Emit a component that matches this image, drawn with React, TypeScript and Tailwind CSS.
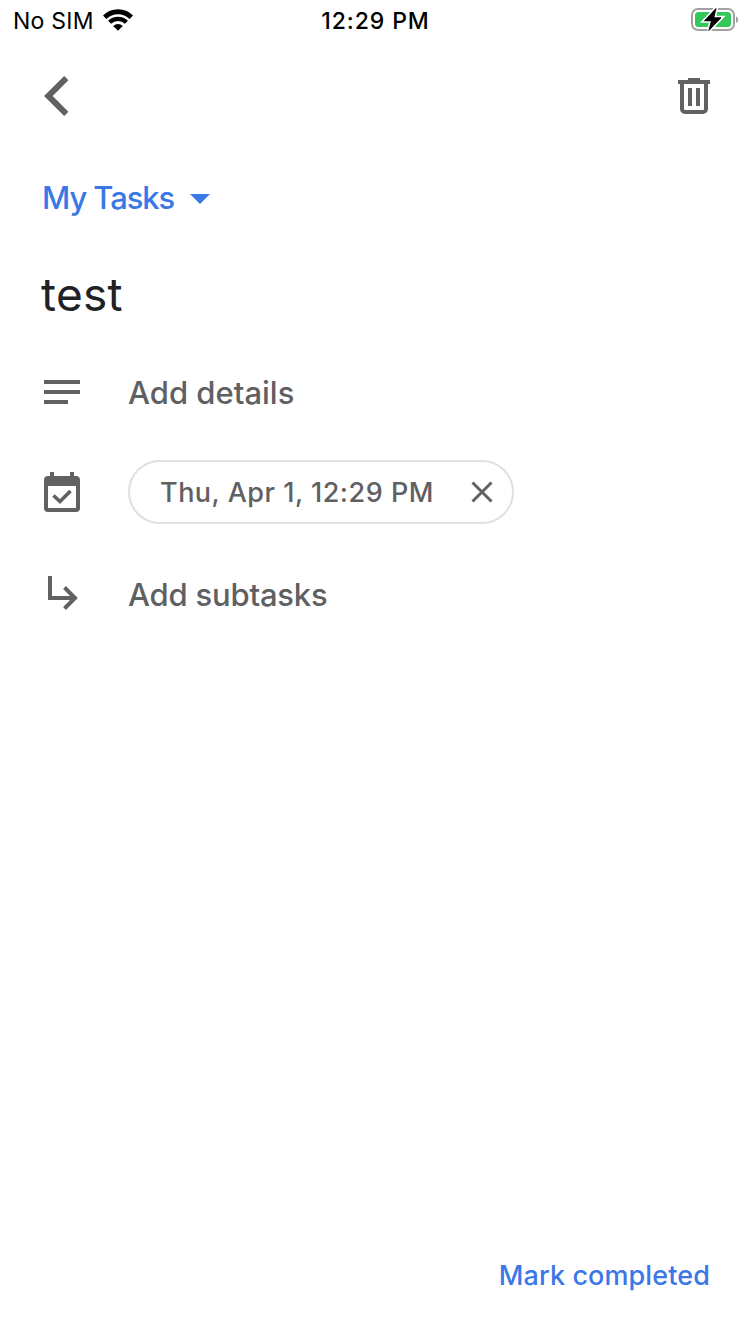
import type { ReactNode } from "react";

function StatusBar() {
  return (
    <div className="grid h-10 grid-cols-3 items-center pl-[13px] pr-[11px] text-black">
      <div className="flex items-center gap-[9px]">
        <span className="whitespace-nowrap pt-0.5 text-[23px] leading-[38px] tracking-[0.25px]">No SIM</span>
        <svg width="30" height="22" viewBox="0 0 30 22" fill="none" stroke="#000">
          <path d="M1.700 8.200a19 19 0 0 1 26.600 0" strokeWidth="4.800" />
          <path d="M6.600 13.300a12 12 0 0 1 16.800 0" strokeWidth="4.400" />
          <path d="M10.200 17a7 7 0 0 1 9.600 0L15 21.800z" fill="#000" stroke="none" />
        </svg>
      </div>
      <span className="whitespace-nowrap pt-0.5 pr-px text-center text-[23px] font-medium leading-[38px] tracking-[0.9px]">12:29 PM</span>
      <svg className="justify-self-end" width="48" height="24" viewBox="0 0 48 24">
        <rect x="1" y="1" width="42" height="21" rx="6" fill="#fff" stroke="#a2a2a4" strokeWidth="2" />
        <rect x="4" y="4" width="36" height="15" rx="3.5" fill="#34c759" />
        <path d="M45 8.200c3 1.500 3 5.200 0 6.800z" fill="#a2a2a4" />
        <path d="M25 .5 13.500 12.800h7L17.800 22.500 30 9.800h-7.200z" fill="#000" stroke="#fff" strokeWidth="4" paintOrder="stroke" />
        <path d="M25 .5 13.500 12.800h7L17.800 22.500 30 9.800h-7.200z" fill="#000" stroke="#000" strokeWidth=".8" />
      </svg>
    </div>
  );
}

function Row({ icon, children, className }: { icon: ReactNode; children: ReactNode; className: string }) {
  return (
    <div className={`flex items-center gap-12 pl-[44px] ${className}`}>
      <div className="flex w-9 shrink-0 justify-center">{icon}</div>
      {children}
    </div>
  );
}

export default function App() {
  return (
    <main className="flex h-[1334px] w-[750px] flex-col bg-white font-['Inter',sans-serif] text-[#5f6062]">
      <StatusBar />

      <header className="flex h-28 items-center justify-between pl-[44px] pr-10">
        <button aria-label="Back">
          <svg width="25" height="40" viewBox="0 0 25 40" fill="none" stroke="#606163" strokeWidth="6">
            <path d="M22.300 2.200 4.300 20l18 17.800" />
          </svg>
        </button>
        <button aria-label="Delete">
          <svg width="32" height="36" viewBox="0 0 32 36" fill="none" stroke="#606163" strokeWidth="4">
            <path d="M0 4h32M10 2h12" />
            <path d="M4 4v27a3 3 0 0 0 3 3h18a3 3 0 0 0 3-3V4M12 10v18M20 10v18" />
          </svg>
        </button>
      </header>

      <button className="flex h-[92px] items-center gap-4 pl-[42px] text-[#3b78e7]">
        <span className="text-[31px] font-medium leading-10 tracking-[-1.1px]">My Tasks</span>
        <svg className="mt-px" width="20" height="10" viewBox="0 0 20 10" fill="#3b78e7">
          <path d="M0 0h20L10 10z" />
        </svg>
      </button>

      <h1 className="flex h-[102px] items-center pb-0.5 pl-[41px] text-[46px] leading-none tracking-[0.3px] text-[#202124]">test</h1>

      <Row
        className="h-[92px]"
        icon={
          <svg width="36" height="24" viewBox="0 0 36 24" fill="#606163">
            <path d="M0 0h36v4H0zM0 10h36v4H0zM0 20h24v4H0z" />
          </svg>
        }
      >
        <span className="pt-0.5 text-[31px] font-medium leading-10">Add details</span>
      </Row>

      <Row
        className="h-[108px]"
        icon={
          <svg width="36" height="40" viewBox="0 0 36 40">
            <path fillRule="evenodd" fill="#606163" d="M6 0h4v4h16V0h4v4h2a4 4 0 0 1 4 4v28a4 4 0 0 1-4 4H4a4 4 0 0 1-4-4V8a4 4 0 0 1 4-4h2zM4 14v22h28V14z" />
            <path d="m9.500 23.500 6.500 6 10.500-10.500" fill="none" stroke="#606163" strokeWidth="3.600" />
          </svg>
        }
      >
        <div className="flex h-16 w-[386px] items-center justify-between rounded-full border-2 border-[#dfe0e1] pl-[30px] pr-[19px]">
          <span className="whitespace-nowrap pt-0.5 text-[27px] font-medium leading-8 tracking-[0.5px]">Thu, Apr 1, 12:29 PM</span>
          <svg width="22" height="22" viewBox="0 0 22 22" fill="none" stroke="#606163" strokeWidth="3">
            <path d="m1.500 1.500 19 19M20.500 1.500l-19 19" />
          </svg>
        </div>
      </Row>

      <Row
        className="h-[94px]"
        icon={
          <svg className="ml-0.5" width="30" height="34" viewBox="0 0 30 34" fill="none" stroke="#606163" strokeWidth="4">
            <path d="M2 0v22h25M16.500 11.500 27 22 16.500 32.500" />
          </svg>
        }
      >
        <span className="pt-1 text-[31px] font-medium leading-10 tracking-[-0.2px]">Add subtasks</span>
      </Row>

      <footer className="mt-auto flex justify-end pb-[38px] pr-10">
        <button className="text-[27px] font-medium leading-10 tracking-[0.1px] text-[#3b78e7]">Mark completed</button>
      </footer>
    </main>
  );
}
